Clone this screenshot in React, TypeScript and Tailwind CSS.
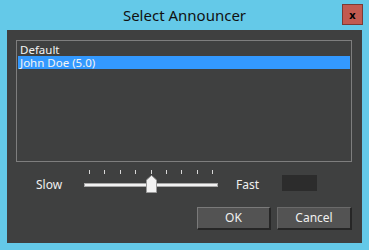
import React from "react";

const ticks = [0, 1, 2, 3, 4, 5, 6, 7, 8];

const SpeedSlider = () => (
  <div className="relative w-[134px] h-[23px]">
    <div className="flex justify-between px-[5px]">
      {ticks.map((t) => (
        <div key={t} className="w-px h-[4px] bg-[#d8d8d8]" />
      ))}
    </div>
    <div className="mt-[9px] h-[4px] bg-[#f2f2f2] border border-[#a8a8a8]" />
    <svg
      className="absolute left-[62px] top-[5px]"
      width="11"
      height="18"
      viewBox="0 0 11 18"
    >
      <path
        d="M0.5 17.5 V5 L5.5 0.5 L10.5 5 V17.5 Z"
        fill="#f3f3f3"
        stroke="#9a9a9a"
      />
    </svg>
  </div>
);

export default function App() {
  return (
    <div
      className="w-[369px] h-[250px] bg-[#64c9e8] flex flex-col"
      style={{ fontFamily: '"Noto Sans", "Open Sans", sans-serif' }}
    >
      <div className="relative h-[30px] flex items-center justify-center">
        <span className="text-[15px] text-[#111] leading-none">Select Announcer</span>
        <button className="absolute left-[342px] top-[4px] w-[21px] h-[21px] bg-[#c25a50] border border-[#7b3a34] flex items-center justify-center text-[11px] font-bold text-black leading-none">
          x
        </button>
      </div>
      <div className="mx-[7px] h-[213px] bg-[#3f4040] flex flex-col pl-[9px] pr-[10px] pt-[10px]">
        <div className="h-[122px] border border-[#7e7e7e] p-px text-[11.5px] leading-[11px] text-[#f4f4f4]">
          <div className="h-[14px] pl-[2px] flex items-center">Default</div>
          <div className="h-[13px] pl-[2px] bg-[#3399ff] flex items-center">John Doe (5.0)</div>
        </div>
        <div className="flex items-start mt-[8px] text-[12px] text-[#f0f0f0]">
          <span className="ml-[20px] mt-[6px] w-[48px]">Slow</span>
          <SpeedSlider />
          <span className="ml-[18px] mt-[6px] w-[46px]">Fast</span>
          <div className="mt-[5px] w-[35px] h-[16px] bg-[#2c2c2c]" />
        </div>
        <div className="flex justify-end gap-[6px] mt-[13px]">
          <button className="w-[74px] h-[23px] bg-[#535353] border-t border-l border-[#7a7a7a] border-b-2 border-r-2 border-b-[#262626] border-r-[#262626] text-[12px] text-[#f0f0f0]">
            OK
          </button>
          <button className="w-[75px] h-[23px] bg-[#535353] border-t border-l border-[#6a6a6a] border-b-2 border-r-2 border-b-[#262626] border-r-[#262626] text-[12px] text-[#f0f0f0]">
            Cancel
          </button>
        </div>
      </div>
    </div>
  );
}
